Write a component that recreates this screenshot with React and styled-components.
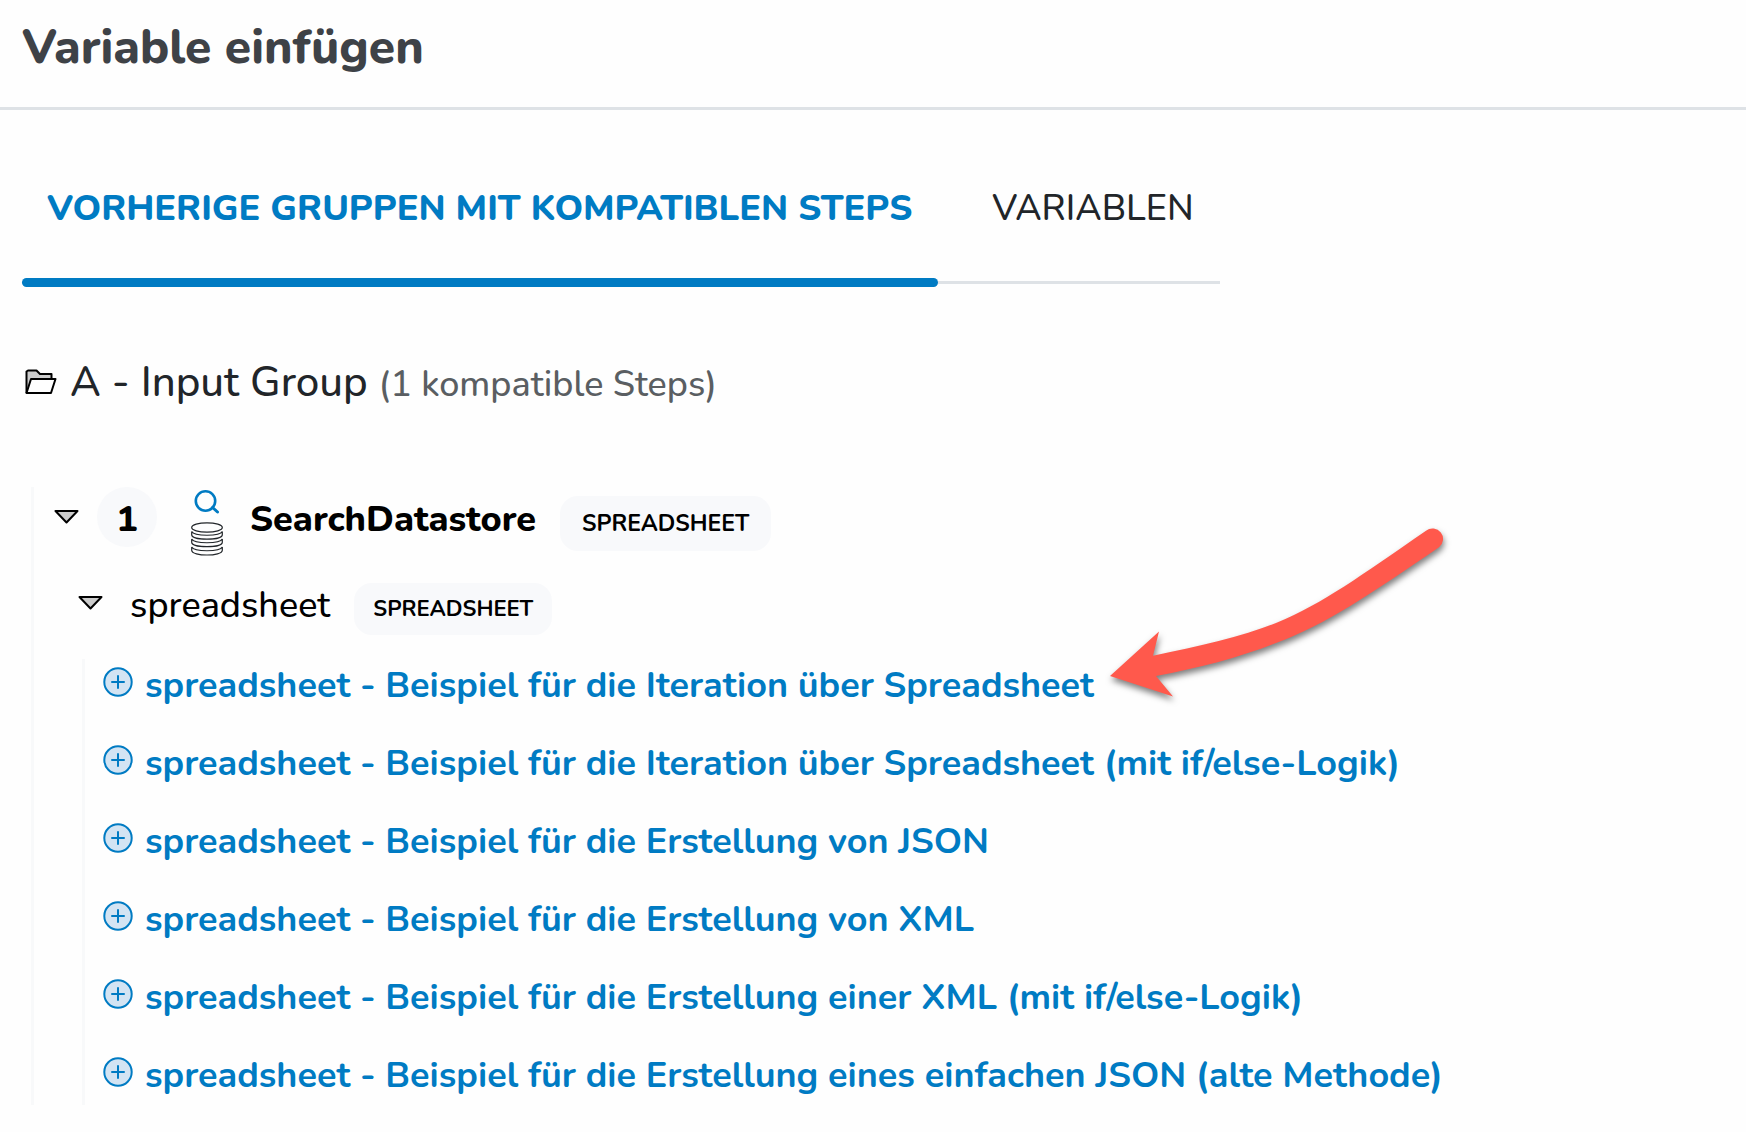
// App.jsx
import React, { useState } from "react";
import styled, { createGlobalStyle } from "styled-components";

const GlobalStyle = createGlobalStyle`
  * {
    box-sizing: border-box;
  }

  body {
    margin: 0;
    background-color: #fefefe;
    color: #212529;
    font-family: Nunito, Lato, sans-serif;
    font-size: 36px;
    font-weight: 500;
    line-height: 54px;
  }

  button {
    font: inherit;
    color: inherit;
    background: none;
    border: none;
    padding: 0;
    cursor: pointer;
  }

  svg {
    display: block;
    flex-shrink: 0;
  }
`;

const Header = styled.header`
  padding: 18px 22px 31px;
  border-bottom: 3px solid #dee2e6;
`;

const Title = styled.h1`
  margin: 0;
  color: #3e4247;
  font-size: 48px;
  font-weight: 800;
  line-height: 58px;
`;

const Content = styled.main`
  padding: 72px 22px 28px;
`;

const TabList = styled.div`
  display: flex;
`;

const Tab = styled.button`
  position: relative;
  height: 102px;
  padding: 0 26px 45px 25px;
  border-bottom: 3px solid #dee2e6;
  color: ${({ $active }) => ($active ? "#007bc3" : "#212529")};
  font-weight: ${({ $active }) => ($active ? 800 : 500)};
  white-space: nowrap;

  & + & {
    padding-left: 54px;
  }

  &::after {
    content: "";
    display: ${({ $active }) => ($active ? "block" : "none")};
    position: absolute;
    left: 0;
    right: 0;
    bottom: -6px;
    height: 9px;
    border-radius: 5px;
    background-color: #007bc3;
  }
`;

const GroupTitle = styled.h2`
  display: flex;
  align-items: center;
  gap: 13px;
  margin: 67px 0 0;
  padding-left: 3px;
  font-size: 42px;
  font-weight: 500;
  line-height: 56px;
`;

const GroupName = styled.span`
  padding-top: 4px;
`;

const StepCount = styled.small`
  color: #5a5e62;
  font-size: 36px;
`;

const Tree = styled.div`
  margin: 74px 0 0 9px;
  padding-left: 20px;
  border-left: 3px solid #f8f9fa;
`;

const Row = styled.div`
  display: flex;
  align-items: center;
  height: 60px;
  color: #000;
`;

const ChildRow = styled(Row)`
  margin-top: 26px;
  padding-left: 24px;
`;

const StepNumber = styled.span`
  width: 60px;
  height: 60px;
  margin-left: 18px;
  border-radius: 50%;
  background-color: #f8f9fb;
  font-weight: 800;
  line-height: 66px;
  text-align: center;
`;

const StepIcon = styled.span`
  margin: 10px 27px 0 34px;
`;

const StepName = styled.span`
  padding-top: 6px;
  font-weight: 800;
`;

const PropertyName = styled.span`
  margin-left: 27px;
  padding-top: 6px;
`;

const Badge = styled.span`
  margin: 12px 0 0 24px;
  padding: 0 ${({ $small }) => ($small ? 19 : 22)}px;
  border-radius: 18px;
  background-color: #f8f9fb;
  font-size: ${({ $small }) => ($small ? 22 : 23)}px;
  font-weight: 700;
  line-height: ${({ $small }) => ($small ? 52 : 55)}px;
`;

const ExampleList = styled.ul`
  display: grid;
  gap: 24px;
  margin: 26px 0 0 28px;
  padding: 0 0 2px 18px;
  border-left: 3px solid #f8f9fa;
  list-style: none;
`;

const Example = styled.li`
  position: relative;
  justify-self: start;
`;

const ExampleButton = styled.button`
  display: flex;
  align-items: flex-start;
  gap: 12px;
  color: #007bc3;
  font-weight: 700;
  text-align: left;

  svg {
    margin-top: 8px;
  }
`;

const Pointer = styled.svg`
  position: absolute;
  left: calc(100% + 16px);
  bottom: 15px;
  overflow: visible;
  pointer-events: none;
  filter: drop-shadow(1px 4px 3px rgba(0, 0, 0, 0.5));
`;

const FolderIcon = () => (
  <svg width="32" height="26" viewBox="0 0 32 26" fill="#ccc" stroke="#000" strokeWidth="2" strokeLinejoin="round">
    <path d="M1.500 24V2.500L3 1.500h8.500l3.500 3.500h11.500v4.500" />
    <path d="M1.500 24 6 10h24.500L26 24Z" fill="#fff" />
  </svg>
);

const CaretIcon = () => (
  <svg width="25" height="14" viewBox="0 0 25 14" fill="#ccc" stroke="#000" strokeWidth="2" strokeLinejoin="round">
    <path d="M1.500 1h22l-11 11.500Z" />
  </svg>
);

const SearchDatabaseIcon = () => (
  <svg width="32" height="67" viewBox="0 0 32 67" fill="none">
    <circle cx="14.500" cy="12" r="9.700" stroke="#007bc3" strokeWidth="2.600" />
    <path d="m21.500 18.500 5 4.500" stroke="#007bc3" strokeWidth="3" strokeLinecap="round" />
    <g stroke="#212529" strokeWidth="1.200">
      <ellipse cx="16" cy="38.500" rx="15.300" ry="4.700" />
      <path d="M.7 42.500v3.200c0 6 30.600 6 30.600 0v-3.200c-2.500 5-28.100 5-30.600 0Z" />
      <path d="M.7 50v3.200c0 6 30.600 6 30.600 0V50c-2.500 5-28.100 5-30.600 0Z" />
      <path d="M.7 58v3.200c0 6.400 30.600 6.400 30.600 0V58c-2.500 5-28.100 5-30.600 0Z" />
    </g>
  </svg>
);

const PlusIcon = () => (
  <svg width="30" height="30" viewBox="0 0 30 30" stroke="#007bc3" strokeWidth="2" strokeLinecap="round">
    <circle cx="15" cy="15" r="13.700" fill="#d3e4f3" />
    <path d="M15 9v12M9 15h12" />
  </svg>
);

const PointerArrow = () => (
  <Pointer width="336" height="170" viewBox="0 0 336 170" aria-hidden="true">
    <path
      fill="#ff594c"
      d="M0 148 49 103.500 43 127.700C90 118 130 109 166 95C214 75 250 48 316 2.700A10.500 10.500 0 0 1 329 19.300C262 65 216 97 166 115C128 130 88 140 46 148L63 168.500Z"
    />
  </Pointer>
);

const TABS = ["VORHERIGE GRUPPEN MIT KOMPATIBLEN STEPS", "VARIABLEN"];

const EXAMPLES = [
  "spreadsheet - Beispiel für die Iteration über Spreadsheet",
  "spreadsheet - Beispiel für die Iteration über Spreadsheet (mit if/else-Logik)",
  "spreadsheet - Beispiel für die Erstellung von JSON",
  "spreadsheet - Beispiel für die Erstellung von XML",
  "spreadsheet - Beispiel für die Erstellung einer XML (mit if/else-Logik)",
  "spreadsheet - Beispiel für die Erstellung eines einfachen JSON (alte Methode)",
];

export default function App() {
  const [activeTab, setActiveTab] = useState(0);

  return (
    <>
      <GlobalStyle />
      <Header>
        <Title>Variable einfügen</Title>
      </Header>
      <Content>
        <TabList role="tablist">
          {TABS.map((tab, index) => (
            <Tab
              key={tab}
              type="button"
              role="tab"
              aria-selected={index === activeTab}
              $active={index === activeTab}
              onClick={() => setActiveTab(index)}
            >
              {tab}
            </Tab>
          ))}
        </TabList>

        <GroupTitle>
          <FolderIcon />
          <GroupName>
            A - Input Group <StepCount>(1 kompatible Steps)</StepCount>
          </GroupName>
        </GroupTitle>

        <Tree>
          <Row>
            <button type="button" aria-label="SearchDatastore">
              <CaretIcon />
            </button>
            <StepNumber>1</StepNumber>
            <StepIcon>
              <SearchDatabaseIcon />
            </StepIcon>
            <StepName>SearchDatastore</StepName>
            <Badge>SPREADSHEET</Badge>
          </Row>
          <ChildRow>
            <button type="button" aria-label="spreadsheet">
              <CaretIcon />
            </button>
            <PropertyName>spreadsheet</PropertyName>
            <Badge $small>SPREADSHEET</Badge>
          </ChildRow>
          <ExampleList>
            {EXAMPLES.map((example, index) => (
              <Example key={example}>
                <ExampleButton type="button">
                  <PlusIcon />
                  {example}
                </ExampleButton>
                {index === 0 && <PointerArrow />}
              </Example>
            ))}
          </ExampleList>
        </Tree>
      </Content>
    </>
  );
}
